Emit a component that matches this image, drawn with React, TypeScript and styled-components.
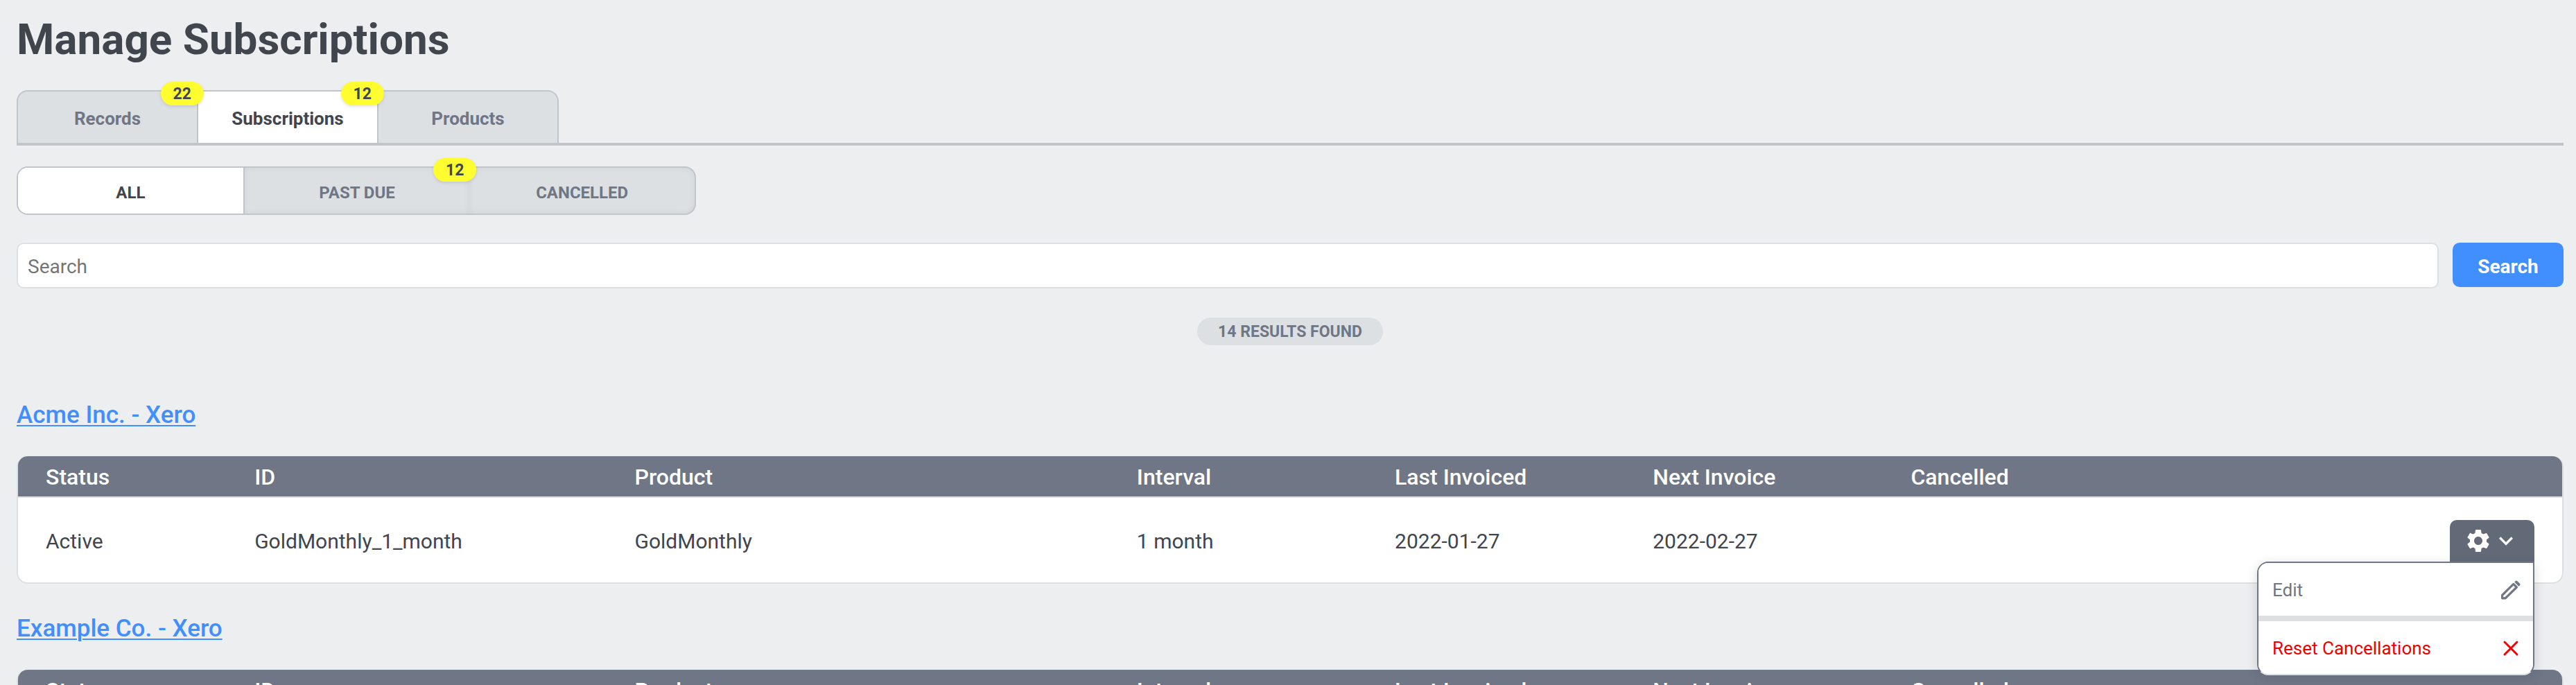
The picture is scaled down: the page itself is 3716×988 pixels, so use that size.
import React from "react";
import styled, { createGlobalStyle } from "styled-components";
import { MdSettings, MdKeyboardArrowDown } from "react-icons/md";

const colors = {
  page: "#edeef0",
  text: "#41454e",
  muted: "#6f7685",
  mutedDark: "#626977",
  panel: "#dce0e3",
  line: "#bfc5cb",
  blue: "#418fff",
  yellow: "#fffd2f",
  red: "#f00000",
};

const GlobalStyle = createGlobalStyle`
  * { box-sizing: border-box; }
  html { height: 100%; }
  body {
    margin: 0;
    height: 100%;
    overflow: hidden;
    background: ${colors.page};
    color: ${colors.text};
    font-family: Roboto, "Liberation Sans", sans-serif;
    font-size: 32px;
  }
  button, input { font-family: inherit; }
`;

const Page = styled.main`
  padding: 18px 18px 0 24px;
`;

const Title = styled.h1`
  margin: 0 0 34px;
  font-size: 62px;
  line-height: 78px;
  font-weight: 700;
`;

const Tabs = styled.nav`
  display: flex;
  border-bottom: 4px solid ${colors.line};
`;

const Tab = styled.button<{ $active?: boolean }>`
  position: relative;
  width: 262px;
  height: 76px;
  padding: 4px 0 0;
  border: 2px solid ${colors.line};
  border-bottom: 0;
  background: ${(p) => (p.$active ? "#fff" : colors.panel)};
  color: ${(p) => (p.$active ? colors.text : colors.muted)};
  font-size: 26px;
  font-weight: 700;
  & + & { margin-left: -2px; }
  border-radius: ${(p) => (p.$active ? "8px 8px 0 0" : "0")};
  &:first-child { border-top-left-radius: 16px; }
  &:last-child { border-top-right-radius: 16px; }
`;

const Badge = styled.span`
  position: absolute;
  z-index: 1;
  top: -14px;
  right: -10px;
  min-width: 60px;
  padding: 2px 18px 0;
  border-radius: 17px;
  background: ${colors.yellow};
  color: ${colors.text};
  box-shadow: 0 2px 4px rgba(65, 69, 78, 0.15);
  font-size: 23px;
  line-height: 32px;
  font-weight: 700;
  text-align: center;
`;

const Filters = styled.div`
  display: flex;
  width: 980px;
  margin-top: 30px;
  border: 2px solid ${colors.line};
  border-radius: 16px;
  background: ${colors.panel};
`;

const Filter = styled.button<{ $active?: boolean }>`
  position: relative;
  flex: 1;
  height: 66px;
  padding: 6px 0 0;
  border: 0;
  background: ${(p) => (p.$active ? "#fff" : "transparent")};
  color: ${(p) => (p.$active ? colors.text : colors.muted)};
  box-shadow: ${(p) => (p.$active ? "none" : "inset 0 0 8px rgba(65, 69, 78, 0.08)")};
  font-size: 24px;
  font-weight: 700;
  &:first-child {
    border-right: 2px solid ${colors.line};
    border-radius: 14px 0 0 14px;
  }
  &:last-child { border-radius: 0 14px 14px 0; }
`;

const SearchForm = styled.form`
  display: flex;
  align-items: flex-start;
  gap: 20px;
  margin-top: 40px;
`;

const SearchInput = styled.input`
  flex: 1;
  height: 66px;
  padding: 2px 14px 0;
  border: 2px solid ${colors.panel};
  border-radius: 10px;
  background: #fff;
  font-size: 28px;
  &::placeholder { color: #757575; }
`;

const SearchButton = styled.button`
  width: 160px;
  height: 64px;
  padding: 4px 0 0;
  border: 0;
  border-radius: 10px;
  background: ${colors.blue};
  color: #fff;
  font-size: 28px;
  font-weight: 700;
`;

const ResultCount = styled.p`
  width: fit-content;
  margin: 42px auto 78px;
  padding: 2px 30px 0;
  border-radius: 20px;
  background: ${colors.panel};
  color: ${colors.muted};
  font-size: 23px;
  line-height: 38px;
  font-weight: 700;
`;

const Customer = styled.h2`
  margin: 0;
  padding: 0 0 36px;
  font-size: 35px;
  line-height: 46px;
  font-weight: 500;
`;

const CustomerLink = styled.a`
  color: ${colors.blue};
  text-decoration: underline;
  text-decoration-thickness: 2px;
  text-underline-offset: 3px;
`;

const Card = styled.div`
  margin-bottom: 42px;
  border: 2px solid ${colors.panel};
  border-top: 0;
  border-radius: 16px;
  background: #fff;
`;

const Table = styled.table`
  width: 100%;
  table-layout: fixed;
  border-collapse: separate;
  border-spacing: 0;
  text-align: left;
`;

const HeadCell = styled.th`
  height: 60px;
  padding: 2px 0 0;
  border-bottom: 2px solid ${colors.panel};
  background: ${colors.muted};
  color: #fff;
  font-size: 32px;
  line-height: 36px;
  font-weight: 500;
  &:first-child { padding-left: 40px; border-top-left-radius: 14px; }
  &:last-child { border-top-right-radius: 14px; }
`;

const Cell = styled.td`
  height: 122px;
  padding: 2px 0 0;
  font-size: 30px;
  &:first-child { padding-left: 40px; }
  &:last-child { padding-right: 40px; }
`;

const MenuAnchor = styled.div`
  position: relative;
  width: 122px;
  margin-left: auto;
`;

const MenuButton = styled.button`
  display: flex;
  align-items: center;
  width: 122px;
  height: 60px;
  padding: 0 0 0 21px;
  border: 0;
  border-radius: 10px 10px 0 0;
  background: ${colors.mutedDark};
  color: #fff;
`;

const Menu = styled.div`
  position: absolute;
  z-index: 2;
  top: 60px;
  right: 0;
  width: 400px;
  overflow: hidden;
  border: 2px solid ${colors.muted};
  border-bottom-color: ${colors.panel};
  border-radius: 16px 0 16px 16px;
  background: #fff;
  box-shadow: 0 4px 16px rgba(65, 69, 78, 0.2);
`;

const MenuItem = styled.button<{ $danger?: boolean }>`
  display: flex;
  align-items: center;
  justify-content: space-between;
  width: 100%;
  height: 76px;
  padding: 2px 18px 0 20px;
  border: 0;
  background: #fff;
  color: ${(p) => (p.$danger ? colors.red : colors.muted)};
  font-size: 26px;
  font-weight: 400;
  & + & {
    height: 84px;
    border-top: 8px solid ${colors.panel};
  }
`;

const PencilIcon = () => (
  <svg width="28" height="28" viewBox="0 0 28 28" fill="none" aria-hidden="true">
    <path d="M1.6 25.8V21.4L17.8 5.4L22.4 10L6.2 25.8Z" stroke="currentColor" strokeWidth="3.2" strokeLinejoin="round" />
    <path d="M19.2 2.6L20.8 1Q22 0 23.2 1L27 4.8Q28 6 27 7.2L25.4 8.8Z" fill="currentColor" />
  </svg>
);

const CrossIcon = () => (
  <svg width="28" height="28" viewBox="0 0 28 28" fill="none" aria-hidden="true">
    <path d="M5 5L23 23M23 5L5 23" stroke="currentColor" strokeWidth="3" strokeLinecap="round" />
  </svg>
);

// Relative column widths; the actions column takes what is left.
const TOTAL = 3668;
const columns = [
  { name: "Status", share: 341 },
  { name: "ID", share: 548 },
  { name: "Product", share: 724 },
  { name: "Interval", share: 372 },
  { name: "Last Invoiced", share: 372 },
  { name: "Next Invoice", share: 372 },
  { name: "Cancelled", share: 372 },
];

const subscription = ["Active", "GoldMonthly_1_month", "GoldMonthly", "1 month", "2022-01-27", "2022-02-27", ""];

const customers = [
  { name: "Acme Inc. - Xero", open: true, values: subscription },
  { name: "Example Co. - Xero", open: false, values: subscription },
];

export default function App() {
  return (
    <>
      <GlobalStyle />
      <Page>
        <Title>Manage Subscriptions</Title>
        <Tabs aria-label="Sections">
          <Tab type="button">Records<Badge>22</Badge></Tab>
          <Tab type="button" $active>Subscriptions<Badge>12</Badge></Tab>
          <Tab type="button">Products</Tab>
        </Tabs>
        <Filters>
          <Filter type="button" $active>ALL</Filter>
          <Filter type="button">PAST DUE<Badge>12</Badge></Filter>
          <Filter type="button">CANCELLED</Filter>
        </Filters>
        <SearchForm onSubmit={(e) => e.preventDefault()}>
          <SearchInput type="search" placeholder="Search" aria-label="Search" />
          <SearchButton type="submit">Search</SearchButton>
        </SearchForm>
        <ResultCount>14 RESULTS FOUND</ResultCount>
        {customers.map((customer) => (
          <section key={customer.name}>
            <Customer><CustomerLink href="#">{customer.name}</CustomerLink></Customer>
            <Card>
              <Table>
                <colgroup>
                  {columns.map((c) => (
                    <col key={c.name} style={{ width: `${(c.share / TOTAL) * 100}%` }} />
                  ))}
                  <col />
                </colgroup>
                <thead>
                  <tr>
                    {columns.map((c) => <HeadCell key={c.name}>{c.name}</HeadCell>)}
                    <HeadCell aria-label="Actions" />
                  </tr>
                </thead>
                <tbody>
                  <tr>
                    {customer.values.map((value, i) => <Cell key={columns[i].name}>{value}</Cell>)}
                    <Cell>
                      <MenuAnchor>
                        <MenuButton type="button" aria-label="Actions" aria-expanded={customer.open}>
                          <MdSettings size={40} />
                          <MdKeyboardArrowDown size={40} />
                        </MenuButton>
                        {customer.open && (
                          <Menu>
                            <MenuItem type="button">Edit<PencilIcon /></MenuItem>
                            <MenuItem type="button" $danger>Reset Cancellations<CrossIcon /></MenuItem>
                          </Menu>
                        )}
                      </MenuAnchor>
                    </Cell>
                  </tr>
                </tbody>
              </Table>
            </Card>
          </section>
        ))}
      </Page>
    </>
  );
}
